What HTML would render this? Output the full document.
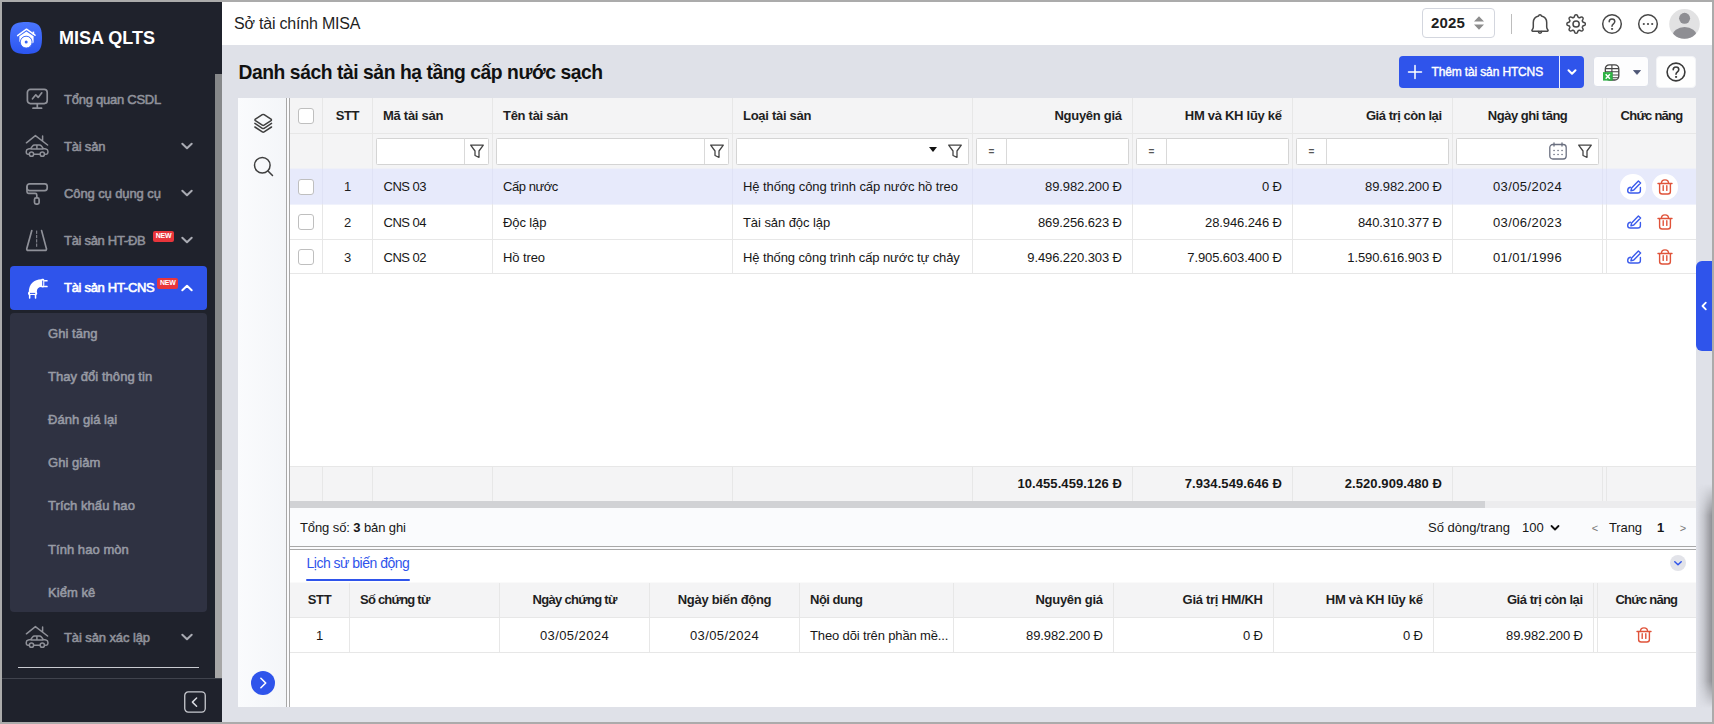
<!DOCTYPE html>
<html lang="vi">
<head>
<meta charset="utf-8">
<title>MISA QLTS</title>
<style>
*{box-sizing:border-box;margin:0;padding:0}
html,body{width:1714px;height:724px;overflow:hidden;background:#dfe1e8;font-family:"Liberation Sans",sans-serif;font-size:13px;color:#171717}
#app{position:absolute;left:0;top:0;width:1714px;height:724px;overflow:hidden;background:#dfe1e8}
.t{position:absolute;white-space:nowrap}
svg{position:absolute;overflow:visible}
.cb{position:absolute;width:16px;height:16px;border:1px solid #bfbfbf;border-radius:3px;background:#fff}
.vl{position:absolute;width:1px;background:#e2e2e2}
.hl{position:absolute;height:1px;background:#e2e2e2}
.fi{position:absolute;height:27px;border:1px solid #d4d4d4;border-radius:1.5px;background:#fff}
</style>
</head>
<body>
<div id="app">
<div style="position:absolute;left:0px;top:0px;width:222px;height:724px;background:#1f222c;"></div>
<div style="position:absolute;left:215px;top:74px;width:7px;height:396px;background:#86888a;"></div>
<div style="position:absolute;left:215px;top:470px;width:7px;height:208px;background:#a7a7a7;"></div>
<svg style="left:10px;top:22px" width="32" height="32" viewBox="0 0 32 32">
<defs><linearGradient id="lg" x1="0" y1="0" x2="0" y2="1"><stop offset="0" stop-color="#4a76ff"/><stop offset="1" stop-color="#2b55f0"/></linearGradient></defs>
<path d="M16 0C28.500 0 32 3.500 32 16C32 28.500 28.500 32 16 32C3.500 32 0 28.500 0 16C0 3.500 3.500 0 16 0Z" fill="url(#lg)"/>
<path d="M7.6 13.6L16.5 7.2L25 13.2" fill="none" stroke="#fff" stroke-width="1.5" stroke-linecap="round" stroke-linejoin="round"/>
<path d="M22.6 9.6h1.6v3h-1.6z" fill="#fff"/>
<path d="M9.4 19.5v-5.2L16.4 9.4L23.6 14.3v6.2l-2 1.2a5.6 5.6 0 1 0 -10.6 -0.6z" fill="#fff"/>
<circle cx="16.200" cy="20.100" r="5.900" fill="#fff" stroke="#3a66f8" stroke-width="0.900"/>
<circle cx="16.200" cy="20.100" r="1.500" fill="#3a66f8"/>
</svg>
<div class="t" style="top:28px;font-size:18px;line-height:20px;font-weight:700;color:#fff;left:59px;">MISA QLTS</div>
<div class="t" style="top:90px;font-size:13px;line-height:20px;color:#90929b;letter-spacing:-0.25px;-webkit-text-stroke:0.55px currentColor;left:64px;">Tổng quan CSDL</div>
<div class="t" style="top:137px;font-size:13px;line-height:20px;color:#90929b;letter-spacing:-0.2px;-webkit-text-stroke:0.55px currentColor;left:64px;">Tài sản</div>
<svg style="left:186.5px;top:145.7px" width="1" height="1"><path d="M-4.700 -2.300L0 2.300L4.700 -2.300" fill="none" stroke="#a9abb3" stroke-width="2" stroke-linecap="round" stroke-linejoin="round"/></svg>
<div class="t" style="top:184px;font-size:13px;line-height:20px;color:#90929b;letter-spacing:-0.1px;-webkit-text-stroke:0.55px currentColor;left:64px;">Công cụ dụng cụ</div>
<svg style="left:186.5px;top:193.2px" width="1" height="1"><path d="M-4.700 -2.300L0 2.300L4.700 -2.300" fill="none" stroke="#a9abb3" stroke-width="2" stroke-linecap="round" stroke-linejoin="round"/></svg>
<div class="t" style="top:231px;font-size:13px;line-height:20px;color:#90929b;letter-spacing:-0.3px;-webkit-text-stroke:0.55px currentColor;left:64px;">Tài sản HT-ĐB</div>
<svg style="left:186.5px;top:240px" width="1" height="1"><path d="M-4.700 -2.300L0 2.300L4.700 -2.300" fill="none" stroke="#a9abb3" stroke-width="2" stroke-linecap="round" stroke-linejoin="round"/></svg>
<div style="position:absolute;left:10px;top:266px;width:197px;height:44px;background:#2f54eb;border-radius:4px;"></div>
<div class="t" style="top:278px;font-size:13px;line-height:20px;color:#fff;letter-spacing:-0.3px;-webkit-text-stroke:0.6px currentColor;left:64px;">Tài sản HT-CNS</div>
<svg style="left:186.5px;top:288px" width="1" height="1"><path d="M-4.700 2.300L0 -2.300L4.700 2.300" fill="none" stroke="#fff" stroke-width="2" stroke-linecap="round" stroke-linejoin="round"/></svg>
<div style="position:absolute;left:153px;top:231.3px;width:21px;height:10.5px;background:#e8353b;border-radius:2px;color:#fff;font-size:7px;font-weight:700;line-height:10.5px;text-align:center;letter-spacing:-0.2px;">NEW</div>
<div style="position:absolute;left:157.3px;top:278.3px;width:21px;height:10.5px;background:#e8353b;border-radius:2px;color:#fff;font-size:7px;font-weight:700;line-height:10.5px;text-align:center;letter-spacing:-0.2px;">NEW</div>
<div style="position:absolute;left:10px;top:312.5px;width:197px;height:299px;background:#2f3242;border-radius:4px;"></div>
<div class="t" style="top:324px;font-size:13px;line-height:20px;color:#979aa4;letter-spacing:0.05px;-webkit-text-stroke:0.55px currentColor;left:48px;">Ghi tăng</div>
<div class="t" style="top:367px;font-size:13px;line-height:20px;color:#979aa4;letter-spacing:0.05px;-webkit-text-stroke:0.55px currentColor;left:48px;">Thay đổi thông tin</div>
<div class="t" style="top:410px;font-size:13px;line-height:20px;color:#979aa4;letter-spacing:0.05px;-webkit-text-stroke:0.55px currentColor;left:48px;">Đánh giá lại</div>
<div class="t" style="top:453px;font-size:13px;line-height:20px;color:#979aa4;letter-spacing:0.05px;-webkit-text-stroke:0.55px currentColor;left:48px;">Ghi giảm</div>
<div class="t" style="top:496px;font-size:13px;line-height:20px;color:#979aa4;letter-spacing:0.05px;-webkit-text-stroke:0.55px currentColor;left:48px;">Trích khấu hao</div>
<div class="t" style="top:540px;font-size:13px;line-height:20px;color:#979aa4;letter-spacing:0.05px;-webkit-text-stroke:0.55px currentColor;left:48px;">Tính hao mòn</div>
<div class="t" style="top:583px;font-size:13px;line-height:20px;color:#979aa4;letter-spacing:0.05px;-webkit-text-stroke:0.55px currentColor;left:48px;">Kiểm kê</div>
<div class="t" style="top:628px;font-size:13px;line-height:20px;color:#90929b;letter-spacing:-0.1px;-webkit-text-stroke:0.55px currentColor;left:64px;">Tài sản xác lập</div>
<svg style="left:186.5px;top:636.5px" width="1" height="1"><path d="M-4.700 -2.300L0 2.300L4.700 -2.300" fill="none" stroke="#a9abb3" stroke-width="2" stroke-linecap="round" stroke-linejoin="round"/></svg>
<div style="position:absolute;left:18px;top:667px;width:181px;height:1px;background:#c9cbd1;"></div>
<div style="position:absolute;left:0px;top:677.6px;width:222px;height:47px;background:#1f222c;border-top:1px solid #40434d;"></div>
<svg style="left:184px;top:690.500px" width="22" height="22" viewBox="0 0 22 22"><rect x="0.750" y="0.900" width="20.500" height="20.200" rx="3.500" fill="none" stroke="#c8cad0" stroke-width="1.300"/><path d="M12.600 7L8.400 11.100L12.600 15.200" fill="none" stroke="#d8dae0" stroke-width="1.500" stroke-linecap="round" stroke-linejoin="round"/></svg>
<svg style="left:25px;top:87px" width="24" height="24" viewBox="0 0 24 24" fill="none" stroke="#8f9199" stroke-width="1.7" stroke-linecap="round" stroke-linejoin="round"><rect x="2.4" y="2.4" width="19.8" height="14.2" rx="3"/><path d="M12.3 16.8v4.2M8 21.2h8.600M7.500 11.800l3.300-4 2.400 2.600 3.600-4.600"/></svg>
<svg style="left:25px;top:134px" width="24" height="24" viewBox="0 0 24 24" fill="none" stroke="#8f9199" stroke-width="1.500" stroke-linecap="round" stroke-linejoin="round"><path d="M1.400 8.800L10.400 1.600L22.600 11M17.600 2v4.800"/><path d="M3.600 20.300h-.6c-1 0-1.700-.7-1.700-1.700v-1.400c0-1.200.8-2 2-2.200l2.300-.4 2-2.600c.5-.7 1.100-1 2-1h4.800c.9 0 1.500.3 2 1l2 2.600 2.500.400c1.200.200 2 1 2 2.200v1.400c0 1-.7 1.700-1.700 1.700h-.6M9 20.300h5.800M11.900 11.200v3.600M6 15h12"/><circle cx="6.500" cy="20.200" r="2.100"/><circle cx="17.300" cy="20.200" r="2.100"/></svg>
<svg style="left:25px;top:625px" width="24" height="24" viewBox="0 0 24 24" fill="none" stroke="#8f9199" stroke-width="1.500" stroke-linecap="round" stroke-linejoin="round"><path d="M1.400 8.800L10.400 1.600L22.600 11M17.600 2v4.800"/><path d="M3.600 20.300h-.6c-1 0-1.700-.7-1.700-1.700v-1.400c0-1.200.8-2 2-2.200l2.300-.4 2-2.600c.5-.7 1.100-1 2-1h4.800c.9 0 1.500.3 2 1l2 2.600 2.500.400c1.200.200 2 1 2 2.200v1.400c0 1-.7 1.700-1.700 1.700h-.6M9 20.300h5.800M11.900 11.200v3.600M6 15h12"/><circle cx="6.500" cy="20.200" r="2.100"/><circle cx="17.300" cy="20.200" r="2.100"/></svg>
<svg style="left:25px;top:182px" width="24" height="24" viewBox="0 0 24 24" fill="none" stroke="#8f9199" stroke-width="1.7" stroke-linecap="round" stroke-linejoin="round"><rect x="2" y="1.800" width="20.200" height="6.800" rx="2.500"/><path d="M2 4.800v5c0 1 .6 1.600 1.500 1.600h6.800c1 0 1.500.5 1.500 1.500v2.600"/><rect x="9.500" y="15.800" width="4.600" height="6.400" rx="1.600"/></svg>
<svg style="left:25px;top:228px" width="24" height="24" viewBox="0 0 24 24" fill="none" stroke="#8f9199" stroke-width="1.7" stroke-linecap="round" stroke-linejoin="round"><path d="M6.800 2.600L1.800 20.600c-.3 1 .3 1.800 1.300 1.800h17c1 0 1.600-.8 1.300-1.800L16.600 2.600"/><path d="M11.700 3v17" stroke-width="1" stroke-dasharray="2.500 1.800"/></svg>
<svg style="left:20px;top:270px" width="36" height="36" viewBox="0 0 36 36" fill="#fff"><path d="M8.800 22C8.800 14 14 9.200 21.400 9.200L21.400 17C18.500 17 16.800 18.700 16.800 22Z"/><rect x="8" y="21.800" width="9.200" height="3.300" rx="1.300"/><rect x="10" y="22.900" width="5.200" height="1" fill="#2f54eb"/><rect x="8.900" y="24.600" width="1.500" height="4.100" rx=".6"/><rect x="14.800" y="24.600" width="1.500" height="4.100" rx=".6"/><rect x="21" y="8.800" width="3.300" height="8.800" rx="1.300"/><rect x="22.200" y="10.600" width="1" height="5.200" fill="#2f54eb"/><rect x="24" y="10.100" width="3.700" height="1.500" rx=".6"/><rect x="24" y="15.800" width="3.700" height="1.500" rx=".6"/></svg>
<div style="position:absolute;left:222px;top:0px;width:1492px;height:45px;background:#fff;"></div>
<div class="t" style="top:14px;font-size:16px;line-height:20px;color:#1f1f1f;letter-spacing:-0.2px;left:234px;">Sở tài chính MISA</div>
<div style="position:absolute;left:1422px;top:7.5px;width:72.5px;height:30px;border:1px solid #d3d6de;border-radius:4px;background:#fff;"></div>
<div class="t" style="top:13px;font-size:15px;line-height:20px;font-weight:700;color:#1f1f1f;letter-spacing:0.15px;left:1431px;">2025</div>
<svg style="left:1473.5px;top:16px" width="10" height="14" viewBox="0 0 10 14"><path d="M5 0.300L10 5.500H0z M5 13.700L10 8.500H0z" fill="#8d8d8d"/></svg>
<div style="position:absolute;left:1511px;top:13.5px;width:1px;height:20px;background:#bdbdbd;"></div>
<svg style="left:1530px;top:13px" width="20" height="22" viewBox="0 0 20 22" fill="none" stroke="#484848" stroke-width="1.500" stroke-linecap="round" stroke-linejoin="round"><path d="M10 1.700C9.200 1.700 8.700 2.200 8.600 2.900C5.300 3.700 3.300 6.100 3.300 9.400V14C3.300 15.200 2.800 16.100 2.100 17C1.700 17.500 2 18.200 2.700 18.200H17.300C18 18.200 18.300 17.500 17.900 17C17.200 16.100 16.700 15.200 16.700 14V9.400C16.700 6.100 14.700 3.700 11.400 2.900C11.300 2.200 10.800 1.700 10 1.700Z"/><path d="M8.300 18.500C8.400 19.700 9 20.200 10 20.200C11 20.200 11.600 19.700 11.700 18.500"/></svg>
<svg style="left:1566px;top:14px" width="20" height="20" viewBox="0 0 20 20" fill="none" stroke="#484848" stroke-width="1.500" stroke-linejoin="round"><path d="M10.10 0.85L10.46 0.86L10.82 0.88L11.15 1.14L11.43 1.60L11.67 2.10L11.87 2.62L12.05 3.09L12.25 3.39L12.51 3.48L12.76 3.58L13.01 3.69L13.26 3.81L13.61 3.74L14.07 3.53L14.57 3.31L15.10 3.12L15.62 2.99L16.04 3.04L16.31 3.28L16.57 3.53L16.82 3.79L17.06 4.06L17.11 4.48L16.98 5.00L16.79 5.53L16.57 6.03L16.36 6.49L16.29 6.84L16.41 7.09L16.52 7.34L16.62 7.59L16.71 7.85L17.01 8.05L17.48 8.23L18.00 8.43L18.50 8.67L18.96 8.95L19.22 9.28L19.24 9.64L19.25 10.00L19.24 10.36L19.22 10.72L18.96 11.05L18.50 11.33L18.00 11.57L17.48 11.77L17.01 11.95L16.71 12.15L16.62 12.41L16.52 12.66L16.41 12.91L16.29 13.16L16.36 13.51L16.57 13.97L16.79 14.47L16.98 15.00L17.11 15.52L17.06 15.94L16.82 16.21L16.57 16.47L16.31 16.72L16.04 16.96L15.62 17.01L15.10 16.88L14.57 16.69L14.07 16.47L13.61 16.26L13.26 16.19L13.01 16.31L12.76 16.42L12.51 16.52L12.25 16.61L12.05 16.91L11.87 17.38L11.67 17.90L11.43 18.40L11.15 18.86L10.82 19.12L10.46 19.14L10.10 19.15L9.74 19.14L9.38 19.12L9.05 18.86L8.77 18.40L8.53 17.90L8.33 17.38L8.15 16.91L7.95 16.61L7.69 16.52L7.44 16.42L7.19 16.31L6.94 16.19L6.59 16.26L6.13 16.47L5.63 16.69L5.10 16.88L4.58 17.01L4.16 16.96L3.89 16.72L3.63 16.47L3.38 16.21L3.14 15.94L3.09 15.52L3.22 15.00L3.41 14.47L3.63 13.97L3.84 13.51L3.91 13.16L3.79 12.91L3.68 12.66L3.58 12.41L3.49 12.15L3.19 11.95L2.72 11.77L2.20 11.57L1.70 11.33L1.24 11.05L0.98 10.72L0.96 10.36L0.95 10.00L0.96 9.64L0.98 9.28L1.24 8.95L1.70 8.67L2.20 8.43L2.72 8.23L3.19 8.05L3.49 7.85L3.58 7.59L3.68 7.34L3.79 7.09L3.91 6.84L3.84 6.49L3.63 6.03L3.41 5.53L3.22 5.00L3.09 4.48L3.14 4.06L3.38 3.79L3.63 3.53L3.89 3.28L4.16 3.04L4.58 2.99L5.10 3.12L5.63 3.31L6.13 3.53L6.59 3.74L6.94 3.81L7.19 3.69L7.44 3.58L7.69 3.48L7.95 3.39L8.15 3.09L8.33 2.62L8.53 2.10L8.77 1.60L9.05 1.14L9.38 0.88L9.74 0.86Z"/><circle cx="10.100" cy="10" r="3.100"/></svg>
<svg style="left:1601px;top:13px" width="22" height="22" viewBox="0 0 22 22" fill="none" stroke="#484848" stroke-width="1.5" stroke-linecap="round" stroke-linejoin="round"><circle cx="11" cy="11" r="9.3"/><path d="M8.200 8.800c0-1.700 1.200-2.800 2.800-2.800s2.800 1.100 2.800 2.600c0 1.300-.8 1.900-1.600 2.500-.8.600-1.200 1.100-1.200 2.100"/><circle cx="11" cy="15.900" r="0.600" fill="#484848" stroke-width="1"/></svg>
<svg style="left:1637px;top:13px" width="22" height="22" viewBox="0 0 22 22" fill="none" stroke="#484848" stroke-width="1.500"><circle cx="11" cy="11" r="9.300"/><g fill="#484848" stroke="none"><circle cx="6.800" cy="11" r="1.100"/><circle cx="11" cy="11" r="1.100"/><circle cx="15.200" cy="11" r="1.100"/></g></svg>
<svg style="left:1668.500px;top:8.500px" width="31" height="30" viewBox="0 0 31 30"><defs><clipPath id="av"><ellipse cx="15.500" cy="15" rx="15" ry="14.700"/></clipPath></defs><ellipse cx="15.500" cy="15" rx="15.300" ry="15" fill="#e2e2e3"/><g clip-path="url(#av)" fill="#8e8e93"><circle cx="15.600" cy="9.300" r="5.500"/><ellipse cx="15.600" cy="27.300" rx="12.200" ry="9.300"/></g></svg>
<div class="t" style="top:63px;font-size:19.3px;line-height:20px;font-weight:700;color:#111;letter-spacing:-0.44px;left:238.5px;">Danh sách tài sản hạ tầng cấp nước sạch</div>
<div style="position:absolute;left:1399px;top:56px;width:160px;height:32px;background:#2f54eb;border-radius:4px 0 0 4px;"></div>
<div style="position:absolute;left:1560px;top:56px;width:24px;height:32px;background:#2f54eb;border-radius:0 4px 4px 0;"></div>
<div style="position:absolute;left:1559px;top:56px;width:1px;height:32px;background:#e8ecff;"></div>
<svg style="left:1408px;top:65px" width="14" height="14" viewBox="0 0 14 14"><path d="M7 0.500v13M0.500 7h13" stroke="#fff" stroke-width="1.500" stroke-linecap="round"/></svg>
<div class="t" style="top:62px;font-size:12px;line-height:20px;color:#fff;letter-spacing:-0.14px;-webkit-text-stroke:0.4px currentColor;left:1431.5px;">Thêm tài sản HTCNS</div>
<svg style="left:1572px;top:72px" width="1" height="1"><path d="M-3.500 -1.800L0 1.800L3.500 -1.800" fill="none" stroke="#fff" stroke-width="2" stroke-linecap="round" stroke-linejoin="round"/></svg>
<div style="position:absolute;left:1592.8px;top:56.4px;width:56.4px;height:30.8px;background:#fdfdfe;border:1px solid #dcdfe8;border-radius:4px;"></div>
<svg style="left:1603px;top:63.500px" width="17" height="17" viewBox="0 0 17 17"><rect x="2.300" y="0.900" width="13.500" height="15.100" rx="4" fill="#fff" stroke="#444" stroke-width="1.300"/><path d="M8.900 0.900v15.100M2.300 4.600h13.500M2.300 7.800h13.500M2.300 11h13.500M6 13.800h9.500" stroke="#444" stroke-width="1.100" fill="none"/><rect x="0" y="8.100" width="9.600" height="8.500" fill="#2eb344"/><path d="M2.700 10.200l4.200 4.600M6.900 10.200l-4.200 4.600" stroke="#fff" stroke-width="1.500"/></svg>
<svg style="left:1632.700px;top:70px" width="8" height="5" viewBox="0 0 8 5"><path d="M0.500 0.500h7L4 4.400z" fill="#4d5575" stroke="#4d5575" stroke-width="0.800" stroke-linejoin="round"/></svg>
<div style="position:absolute;left:1656px;top:56px;width:40px;height:32px;background:#fefefe;border:1px solid #f3f4f7;border-radius:4px;"></div>
<svg style="left:1665.1px;top:61.099999999999994px" width="22" height="22" viewBox="0 0 22 22" fill="none" stroke="#3a3a3a" stroke-width="1.6" stroke-linecap="round" stroke-linejoin="round"><circle cx="11" cy="11" r="8.9"/><path d="M8.200 8.800c0-1.700 1.200-2.800 2.800-2.800s2.800 1.100 2.800 2.600c0 1.300-.8 1.900-1.600 2.500-.8.600-1.200 1.100-1.200 2.100"/><circle cx="11" cy="15.900" r="0.600" fill="#3a3a3a" stroke-width="1"/></svg>
<div style="position:absolute;left:238px;top:98px;width:48px;height:608.5px;background:linear-gradient(90deg,#fafbfd,#f4f6f9);"></div>
<div style="position:absolute;left:286px;top:98px;width:1px;height:608.5px;background:#a8a8a8;"></div>
<div style="position:absolute;left:287px;top:98px;width:2px;height:608.5px;background:#fbfbfd;"></div>
<div style="position:absolute;left:289px;top:98px;width:1px;height:608.5px;background:#a8a8a8;"></div>
<svg style="left:253px;top:113px" width="20" height="20" viewBox="0 0 20 20" fill="none" stroke="#3f3f3f" stroke-width="1.500" stroke-linejoin="round" stroke-linecap="round"><path d="M9.300 1.700q.900-.600 1.800 0L18 6.200q.900.700 0 1.400L11.100 12.100q-.900.600-1.800 0L2.400 7.600q-.900-.700 0-1.400z"/><path d="M1.900 10.400L9.300 15.300q.900.600 1.800 0L18.500 10.400M1.900 14L9.300 18.900q.900.600 1.800 0L18.500 14"/></svg>
<svg style="left:253px;top:156px" width="21" height="21" viewBox="0 0 21 21" fill="none" stroke="#3f3f3f" stroke-width="1.500" stroke-linecap="round"><circle cx="9.300" cy="9.300" r="7.800"/><path d="M15 15l4.500 4.500"/></svg>
<svg style="left:251px;top:671px" width="24" height="24" viewBox="0 0 24 24"><circle cx="12" cy="12" r="12" fill="#2f54eb"/><path d="M9.900 7.300L14.700 12L9.900 16.700" fill="none" stroke="#fff" stroke-width="1.600" stroke-linecap="round" stroke-linejoin="round"/></svg>
<div style="position:absolute;left:290px;top:98px;width:1406px;height:608.5px;background:#fff;"></div>
<div style="position:absolute;left:290px;top:98px;width:1406px;height:71px;background:#f4f4f5;"></div>
<div style="position:absolute;left:290px;top:169px;width:1406px;height:35px;background:#e7eafb;"></div>
<div style="position:absolute;left:290px;top:168px;width:1406px;height:1px;background:#eff0f7;"></div>
<div style="position:absolute;left:290px;top:204px;width:1406px;height:1px;background:#f0f2fc;"></div>
<div style="position:absolute;left:290px;top:133px;width:1406px;height:1px;background:#e7e7e7;"></div>
<div style="position:absolute;left:290px;top:239px;width:1406px;height:1px;background:#e7e7e7;"></div>
<div style="position:absolute;left:290px;top:273px;width:1406px;height:1px;background:#e7e7e7;"></div>
<div style="position:absolute;left:322px;top:98px;width:1px;height:71px;background:#e7e7e7;"></div>
<div style="position:absolute;left:322px;top:169px;width:1px;height:35px;background:#dfe2f5;"></div>
<div style="position:absolute;left:322px;top:204px;width:1px;height:70px;background:#e7e7e7;"></div>
<div style="position:absolute;left:372px;top:98px;width:1px;height:71px;background:#e7e7e7;"></div>
<div style="position:absolute;left:372px;top:169px;width:1px;height:35px;background:#dfe2f5;"></div>
<div style="position:absolute;left:372px;top:204px;width:1px;height:70px;background:#e7e7e7;"></div>
<div style="position:absolute;left:492px;top:98px;width:1px;height:71px;background:#e7e7e7;"></div>
<div style="position:absolute;left:492px;top:169px;width:1px;height:35px;background:#dfe2f5;"></div>
<div style="position:absolute;left:492px;top:204px;width:1px;height:70px;background:#e7e7e7;"></div>
<div style="position:absolute;left:732px;top:98px;width:1px;height:71px;background:#e7e7e7;"></div>
<div style="position:absolute;left:732px;top:169px;width:1px;height:35px;background:#dfe2f5;"></div>
<div style="position:absolute;left:732px;top:204px;width:1px;height:70px;background:#e7e7e7;"></div>
<div style="position:absolute;left:972px;top:98px;width:1px;height:71px;background:#e7e7e7;"></div>
<div style="position:absolute;left:972px;top:169px;width:1px;height:35px;background:#dfe2f5;"></div>
<div style="position:absolute;left:972px;top:204px;width:1px;height:70px;background:#e7e7e7;"></div>
<div style="position:absolute;left:1132px;top:98px;width:1px;height:71px;background:#e7e7e7;"></div>
<div style="position:absolute;left:1132px;top:169px;width:1px;height:35px;background:#dfe2f5;"></div>
<div style="position:absolute;left:1132px;top:204px;width:1px;height:70px;background:#e7e7e7;"></div>
<div style="position:absolute;left:1292px;top:98px;width:1px;height:71px;background:#e7e7e7;"></div>
<div style="position:absolute;left:1292px;top:169px;width:1px;height:35px;background:#dfe2f5;"></div>
<div style="position:absolute;left:1292px;top:204px;width:1px;height:70px;background:#e7e7e7;"></div>
<div style="position:absolute;left:1452px;top:98px;width:1px;height:71px;background:#e7e7e7;"></div>
<div style="position:absolute;left:1452px;top:169px;width:1px;height:35px;background:#dfe2f5;"></div>
<div style="position:absolute;left:1452px;top:204px;width:1px;height:70px;background:#e7e7e7;"></div>
<div style="position:absolute;left:1602px;top:98px;width:1px;height:71px;background:#e7e7e7;"></div>
<div style="position:absolute;left:1602px;top:169px;width:1px;height:35px;background:#dfe2f5;"></div>
<div style="position:absolute;left:1602px;top:204px;width:1px;height:70px;background:#e7e7e7;"></div>
<div style="position:absolute;left:1606px;top:98px;width:1px;height:71px;background:#e7e7e7;"></div>
<div style="position:absolute;left:1606px;top:169px;width:1px;height:35px;background:#dfe2f5;"></div>
<div style="position:absolute;left:1606px;top:204px;width:1px;height:70px;background:#e7e7e7;"></div>
<div class="cb" style="left:298px;top:108px"></div>
<div class="t" style="top:106px;font-size:13px;line-height:20px;font-weight:700;color:#1f1f1f;letter-spacing:-0.5px;left:197.3px;width:300px;text-align:center;">STT</div>
<div class="t" style="top:106px;font-size:13px;line-height:20px;font-weight:700;color:#1f1f1f;letter-spacing:-0.28px;left:383px;">Mã tài sản</div>
<div class="t" style="top:106px;font-size:13px;line-height:20px;font-weight:700;color:#1f1f1f;letter-spacing:-0.28px;left:503px;">Tên tài sản</div>
<div class="t" style="top:106px;font-size:13px;line-height:20px;font-weight:700;color:#1f1f1f;letter-spacing:-0.28px;left:743px;">Loại tài sản</div>
<div class="t" style="top:106px;font-size:13px;line-height:20px;font-weight:700;color:#1f1f1f;letter-spacing:-0.28px;right:592.28px;text-align:right;">Nguyên giá</div>
<div class="t" style="top:106px;font-size:13px;line-height:20px;font-weight:700;color:#1f1f1f;letter-spacing:-0.28px;right:432.28px;text-align:right;">HM và KH lũy kế</div>
<div class="t" style="top:106px;font-size:13px;line-height:20px;font-weight:700;color:#1f1f1f;letter-spacing:-0.45px;right:272.45px;text-align:right;">Giá trị còn lại</div>
<div class="t" style="top:106px;font-size:13px;line-height:20px;font-weight:700;color:#1f1f1f;letter-spacing:-0.5px;left:1377.6px;width:300px;text-align:center;">Ngày ghi tăng</div>
<div class="t" style="top:106px;font-size:13px;line-height:20px;font-weight:700;color:#1f1f1f;letter-spacing:-0.76px;left:1501.5px;width:300px;text-align:center;">Chức năng</div>
<div class="fi" style="left:376px;top:137.500px;width:112.5px"></div>
<div style="position:absolute;left:464px;top:138px;width:1px;height:26px;background:#d9d9d9;"></div>
<svg style="left:470.2px;top:144.2px" width="14" height="14" viewBox="0 0 14 14"><path d="M0.700 1.100h12.600L9 7v6.300L5 11.500V7z" fill="none" stroke="#444" stroke-width="1.300" stroke-linejoin="round"/></svg>
<div class="fi" style="left:496px;top:137.500px;width:232.5px"></div>
<div style="position:absolute;left:704px;top:138px;width:1px;height:26px;background:#d9d9d9;"></div>
<svg style="left:710.2px;top:144.2px" width="14" height="14" viewBox="0 0 14 14"><path d="M0.700 1.100h12.600L9 7v6.300L5 11.500V7z" fill="none" stroke="#444" stroke-width="1.300" stroke-linejoin="round"/></svg>
<div class="fi" style="left:736px;top:137.500px;width:232.5px"></div>
<svg style="left:948.2px;top:144.2px" width="14" height="14" viewBox="0 0 14 14"><path d="M0.700 1.100h12.600L9 7v6.300L5 11.500V7z" fill="none" stroke="#444" stroke-width="1.300" stroke-linejoin="round"/></svg>
<svg style="left:928.500px;top:146.500px" width="8" height="5" viewBox="0 0 8 5"><path d="M0 0h8L4 5z" fill="#111"/></svg>
<div class="fi" style="left:976px;top:137.500px;width:152.5px"></div>
<div style="position:absolute;left:1006px;top:138px;width:1px;height:26px;background:#d9d9d9;"></div>
<div class="t" style="top:142px;font-size:10px;line-height:20px;font-weight:700;color:#555;left:841.5px;width:300px;text-align:center;">=</div>
<div class="fi" style="left:1136px;top:137.500px;width:152.5px"></div>
<div style="position:absolute;left:1166px;top:138px;width:1px;height:26px;background:#d9d9d9;"></div>
<div class="t" style="top:142px;font-size:10px;line-height:20px;font-weight:700;color:#555;left:1001.5px;width:300px;text-align:center;">=</div>
<div class="fi" style="left:1296px;top:137.500px;width:152.5px"></div>
<div style="position:absolute;left:1326px;top:138px;width:1px;height:26px;background:#d9d9d9;"></div>
<div class="t" style="top:142px;font-size:10px;line-height:20px;font-weight:700;color:#555;left:1161.5px;width:300px;text-align:center;">=</div>
<div class="fi" style="left:1456px;top:137.500px;width:142.5px"></div>
<svg style="left:1578.2px;top:144.2px" width="14" height="14" viewBox="0 0 14 14"><path d="M0.700 1.100h12.600L9 7v6.300L5 11.500V7z" fill="none" stroke="#444" stroke-width="1.300" stroke-linejoin="round"/></svg>
<svg style="left:1549px;top:142px" width="18" height="18" viewBox="0 0 18 18" fill="none" stroke="#6b7080" stroke-width="1.300" stroke-linecap="round"><rect x="0.800" y="2.500" width="16.400" height="14.500" rx="3"/><path d="M5 0.800v3.200M13 0.800v3.200"/><g stroke-width="1.500"><path d="M5 8.500h0.100M9 8.500h0.100M13 8.500h0.100M5 12.500h0.100M9 12.500h0.100M13 12.500h0.100"/></g></svg>
<div class="cb" style="left:298px;top:179.0px"></div>
<div class="t" style="top:177px;font-size:13px;line-height:20px;color:#1f1f1f;left:197.5px;width:300px;text-align:center;">1</div>
<div class="t" style="top:177px;font-size:13px;line-height:20px;letter-spacing:-0.5px;left:383.5px;">CNS 03</div>
<div class="t" style="top:177px;font-size:13px;line-height:20px;letter-spacing:-0.44px;left:503px;">Cấp nước</div>
<div class="t" style="top:177px;font-size:13px;line-height:20px;letter-spacing:-0.07px;left:743px;">Hệ thống công trình cấp nước hồ treo</div>
<div class="t" style="top:177px;font-size:13px;line-height:20px;letter-spacing:-0.1px;right:592.10px;text-align:right;">89.982.200 Đ</div>
<div class="t" style="top:177px;font-size:13px;line-height:20px;letter-spacing:-0.1px;right:432.10px;text-align:right;">0 Đ</div>
<div class="t" style="top:177px;font-size:13px;line-height:20px;letter-spacing:-0.1px;right:272.10px;text-align:right;">89.982.200 Đ</div>
<div class="t" style="top:177px;font-size:13px;line-height:20px;letter-spacing:0.4px;left:1377.5px;width:300px;text-align:center;">03/05/2024</div>
<div style="position:absolute;left:1620.4px;top:174.4px;width:25.2px;height:25.2px;background:#fff;border-radius:50%;"></div>
<div style="position:absolute;left:1652.4px;top:174.4px;width:25.2px;height:25.2px;background:#fff;border-radius:50%;"></div>
<svg style="left:1625.5px;top:178.8px" width="16" height="16" viewBox="0 0 16 16" fill="none" stroke="#3b5bec" stroke-width="1.400" stroke-linecap="round" stroke-linejoin="round"><path d="M4.400 8.200C2.600 8.600 1.700 9.800 1.700 11.400C1.700 13.200 2.700 14 4.400 14H11.800C13.500 14 14.400 13.100 14.400 11.400V8.400"/><path d="M12.400 2L14.600 4.100L7.800 11L4.900 11.800L5.600 8.900Z"/></svg>
<svg style="left:1657px;top:178.7px" width="16" height="16" viewBox="0 0 16 16" fill="none" stroke="#e0533a" stroke-width="1.400" stroke-linecap="round" stroke-linejoin="round"><path d="M1 4.500h14M4.400 4.500C4.400 2.200 5.800 .9 8 .9C10.200 .9 11.600 2.200 11.600 4.500"/><path d="M2.600 4.700v7.800c0 1.700.9 2.500 2.500 2.500h5.800c1.600 0 2.500-.8 2.500-2.500V4.700"/><path d="M6.200 6.800v4.600M9.800 6.800v4.600"/></svg>
<div class="cb" style="left:298px;top:214.0px"></div>
<div class="t" style="top:213px;font-size:13px;line-height:20px;color:#1f1f1f;left:197.5px;width:300px;text-align:center;">2</div>
<div class="t" style="top:213px;font-size:13px;line-height:20px;letter-spacing:-0.5px;left:383.5px;">CNS 04</div>
<div class="t" style="top:213px;font-size:13px;line-height:20px;letter-spacing:-0.1px;left:503px;">Độc lập</div>
<div class="t" style="top:213px;font-size:13px;line-height:20px;letter-spacing:-0.07px;left:743px;">Tài sản độc lập</div>
<div class="t" style="top:213px;font-size:13px;line-height:20px;letter-spacing:-0.1px;right:592.10px;text-align:right;">869.256.623 Đ</div>
<div class="t" style="top:213px;font-size:13px;line-height:20px;letter-spacing:-0.1px;right:432.10px;text-align:right;">28.946.246 Đ</div>
<div class="t" style="top:213px;font-size:13px;line-height:20px;letter-spacing:-0.1px;right:272.10px;text-align:right;">840.310.377 Đ</div>
<div class="t" style="top:213px;font-size:13px;line-height:20px;letter-spacing:0.4px;left:1377.5px;width:300px;text-align:center;">03/06/2023</div>
<svg style="left:1625.5px;top:213.8px" width="16" height="16" viewBox="0 0 16 16" fill="none" stroke="#3b5bec" stroke-width="1.400" stroke-linecap="round" stroke-linejoin="round"><path d="M4.400 8.200C2.600 8.600 1.700 9.800 1.700 11.400C1.700 13.200 2.700 14 4.400 14H11.800C13.500 14 14.400 13.100 14.400 11.400V8.400"/><path d="M12.400 2L14.600 4.100L7.800 11L4.900 11.800L5.600 8.900Z"/></svg>
<svg style="left:1657px;top:213.7px" width="16" height="16" viewBox="0 0 16 16" fill="none" stroke="#e0533a" stroke-width="1.400" stroke-linecap="round" stroke-linejoin="round"><path d="M1 4.500h14M4.400 4.500C4.400 2.200 5.800 .9 8 .9C10.200 .9 11.600 2.200 11.600 4.500"/><path d="M2.600 4.700v7.800c0 1.700.9 2.500 2.500 2.500h5.800c1.600 0 2.500-.8 2.500-2.500V4.700"/><path d="M6.200 6.800v4.600M9.800 6.800v4.600"/></svg>
<div class="cb" style="left:298px;top:249.0px"></div>
<div class="t" style="top:248px;font-size:13px;line-height:20px;color:#1f1f1f;left:197.5px;width:300px;text-align:center;">3</div>
<div class="t" style="top:248px;font-size:13px;line-height:20px;letter-spacing:-0.5px;left:383.5px;">CNS 02</div>
<div class="t" style="top:248px;font-size:13px;line-height:20px;letter-spacing:-0.1px;left:503px;">Hồ treo</div>
<div class="t" style="top:248px;font-size:13px;line-height:20px;letter-spacing:-0.1px;left:743px;">Hệ thống công trình cấp nước tự chảy</div>
<div class="t" style="top:248px;font-size:13px;line-height:20px;letter-spacing:-0.1px;right:592.10px;text-align:right;">9.496.220.303 Đ</div>
<div class="t" style="top:248px;font-size:13px;line-height:20px;letter-spacing:-0.1px;right:432.10px;text-align:right;">7.905.603.400 Đ</div>
<div class="t" style="top:248px;font-size:13px;line-height:20px;letter-spacing:-0.1px;right:272.10px;text-align:right;">1.590.616.903 Đ</div>
<div class="t" style="top:248px;font-size:13px;line-height:20px;letter-spacing:0.4px;left:1377.5px;width:300px;text-align:center;">01/01/1996</div>
<svg style="left:1625.5px;top:248.8px" width="16" height="16" viewBox="0 0 16 16" fill="none" stroke="#3b5bec" stroke-width="1.400" stroke-linecap="round" stroke-linejoin="round"><path d="M4.400 8.200C2.600 8.600 1.700 9.800 1.700 11.400C1.700 13.200 2.700 14 4.400 14H11.800C13.500 14 14.400 13.100 14.400 11.400V8.400"/><path d="M12.400 2L14.600 4.100L7.800 11L4.900 11.800L5.600 8.900Z"/></svg>
<svg style="left:1657px;top:248.7px" width="16" height="16" viewBox="0 0 16 16" fill="none" stroke="#e0533a" stroke-width="1.400" stroke-linecap="round" stroke-linejoin="round"><path d="M1 4.500h14M4.400 4.500C4.400 2.200 5.800 .9 8 .9C10.200 .9 11.600 2.200 11.600 4.500"/><path d="M2.600 4.700v7.800c0 1.700.9 2.500 2.500 2.500h5.800c1.600 0 2.500-.8 2.500-2.500V4.700"/><path d="M6.200 6.800v4.600M9.800 6.800v4.600"/></svg>
<div style="position:absolute;left:1696px;top:261px;width:17px;height:90px;background:#2f54eb;border-radius:6px 0 0 6px;"></div>
<svg style="left:1704.300px;top:306.300px" width="1" height="1"><path d="M1.800 -3.300L-1.500 0L1.800 3.300" fill="none" stroke="#fff" stroke-width="1.800" stroke-linecap="round" stroke-linejoin="round"/></svg>
<div style="position:absolute;left:290px;top:466px;width:1406px;height:35.5px;background:#f4f4f5;border-top:1px solid #e7e7e7;"></div>
<div style="position:absolute;left:322px;top:466px;width:1px;height:35.5px;background:#e7e7e7;"></div>
<div style="position:absolute;left:372px;top:466px;width:1px;height:35.5px;background:#e7e7e7;"></div>
<div style="position:absolute;left:492px;top:466px;width:1px;height:35.5px;background:#e7e7e7;"></div>
<div style="position:absolute;left:732px;top:466px;width:1px;height:35.5px;background:#e7e7e7;"></div>
<div style="position:absolute;left:972px;top:466px;width:1px;height:35.5px;background:#e7e7e7;"></div>
<div style="position:absolute;left:1132px;top:466px;width:1px;height:35.5px;background:#e7e7e7;"></div>
<div style="position:absolute;left:1292px;top:466px;width:1px;height:35.5px;background:#e7e7e7;"></div>
<div style="position:absolute;left:1452px;top:466px;width:1px;height:35.5px;background:#e7e7e7;"></div>
<div style="position:absolute;left:1602px;top:466px;width:1px;height:35.5px;background:#e7e7e7;"></div>
<div style="position:absolute;left:1606px;top:466px;width:1px;height:35.5px;background:#e7e7e7;"></div>
<div class="t" style="top:474px;font-size:13px;line-height:20px;font-weight:700;letter-spacing:0.08px;right:591.92px;text-align:right;">10.455.459.126 Đ</div>
<div class="t" style="top:474px;font-size:13px;line-height:20px;font-weight:700;letter-spacing:0.08px;right:431.92px;text-align:right;">7.934.549.646 Đ</div>
<div class="t" style="top:474px;font-size:13px;line-height:20px;font-weight:700;letter-spacing:0.08px;right:271.92px;text-align:right;">2.520.909.480 Đ</div>
<div style="position:absolute;left:290px;top:501px;width:1406px;height:7.5px;background:#ececee;"></div>
<div style="position:absolute;left:290px;top:501px;width:1195px;height:7.5px;background:#d1d2d5;"></div>
<div style="position:absolute;left:290px;top:508px;width:1406px;height:38px;background:#fafbfd;"></div>
<div class="t" style="top:518px;font-size:13px;line-height:20px;letter-spacing:-0.1px;left:300px;">Tổng số: <b>3</b> bản ghi</div>
<div class="t" style="top:518px;font-size:13px;line-height:20px;letter-spacing:0.02px;left:1428px;">Số dòng/trang</div>
<div class="t" style="top:518px;font-size:13px;line-height:20px;left:1522px;">100</div>
<svg style="left:1555px;top:528px" width="1" height="1"><path d="M-3.500 -2L0 1.500L3.500 -2" fill="none" stroke="#111" stroke-width="1.800" stroke-linecap="round" stroke-linejoin="round"/></svg>
<div class="t" style="top:518px;font-size:11px;line-height:20px;color:#777;left:1445px;width:300px;text-align:center;">&lt;</div>
<div class="t" style="top:518px;font-size:13px;line-height:20px;letter-spacing:-0.1px;left:1609px;">Trang</div>
<div class="t" style="top:518px;font-size:13px;line-height:20px;font-weight:700;left:1510.5px;width:300px;text-align:center;">1</div>
<div class="t" style="top:518px;font-size:11px;line-height:20px;color:#777;left:1533px;width:300px;text-align:center;">&gt;</div>
<div style="position:absolute;left:290px;top:546px;width:1406px;height:1px;background:#a8a8a8;"></div>
<div style="position:absolute;left:290px;top:547px;width:1406px;height:2px;background:#fbfbfd;"></div>
<div style="position:absolute;left:290px;top:549px;width:1406px;height:1px;background:#a8a8a8;"></div>
<div class="t" style="top:553px;font-size:14px;line-height:20px;color:#2f54eb;letter-spacing:-0.5px;left:306.5px;">Lịch sử biến động</div>
<div style="position:absolute;left:306px;top:578.5px;width:104px;height:2.3px;background:#2f54eb;border-radius:2px;"></div>
<svg style="left:1670px;top:555px" width="16" height="16" viewBox="0 0 16 16"><circle cx="8" cy="8" r="8" fill="#e2e3e9"/><path d="M4.800 6.800L8 9.800L11.200 6.800" fill="none" stroke="#2f54eb" stroke-width="1.500" stroke-linecap="round" stroke-linejoin="round"/></svg>
<div style="position:absolute;left:290px;top:583px;width:1406px;height:34px;background:#f4f4f5;"></div>
<div style="position:absolute;left:290px;top:582px;width:1406px;height:1px;background:#fafafa;"></div>
<div style="position:absolute;left:290px;top:617px;width:1406px;height:1px;background:#e7e7e7;"></div>
<div style="position:absolute;left:290px;top:652px;width:1406px;height:1px;background:#e7e7e7;"></div>
<div style="position:absolute;left:349px;top:583px;width:1px;height:69px;background:#e7e7e7;"></div>
<div style="position:absolute;left:499px;top:583px;width:1px;height:69px;background:#e7e7e7;"></div>
<div style="position:absolute;left:649px;top:583px;width:1px;height:69px;background:#e7e7e7;"></div>
<div style="position:absolute;left:799px;top:583px;width:1px;height:69px;background:#e7e7e7;"></div>
<div style="position:absolute;left:953px;top:583px;width:1px;height:69px;background:#e7e7e7;"></div>
<div style="position:absolute;left:1113px;top:583px;width:1px;height:69px;background:#e7e7e7;"></div>
<div style="position:absolute;left:1273px;top:583px;width:1px;height:69px;background:#e7e7e7;"></div>
<div style="position:absolute;left:1433px;top:583px;width:1px;height:69px;background:#e7e7e7;"></div>
<div style="position:absolute;left:1593px;top:583px;width:1px;height:69px;background:#e7e7e7;"></div>
<div style="position:absolute;left:1597px;top:583px;width:1px;height:69px;background:#e7e7e7;"></div>
<div class="t" style="top:590px;font-size:13px;line-height:20px;font-weight:700;color:#1f1f1f;letter-spacing:-0.3px;left:169.5px;width:300px;text-align:center;">STT</div>
<div class="t" style="top:590px;font-size:13px;line-height:20px;font-weight:700;color:#1f1f1f;letter-spacing:-0.77px;left:360px;">Số chứng từ</div>
<div class="t" style="top:590px;font-size:13px;line-height:20px;font-weight:700;color:#1f1f1f;letter-spacing:-0.71px;left:424.6px;width:300px;text-align:center;">Ngày chứng từ</div>
<div class="t" style="top:590px;font-size:13px;line-height:20px;font-weight:700;color:#1f1f1f;letter-spacing:-0.28px;left:574.5px;width:300px;text-align:center;">Ngày biến động</div>
<div class="t" style="top:590px;font-size:13px;line-height:20px;font-weight:700;color:#1f1f1f;letter-spacing:-0.5px;left:810px;">Nội dung</div>
<div class="t" style="top:590px;font-size:13px;line-height:20px;font-weight:700;color:#1f1f1f;letter-spacing:-0.28px;right:611.28px;text-align:right;">Nguyên giá</div>
<div class="t" style="top:590px;font-size:13px;line-height:20px;font-weight:700;color:#1f1f1f;letter-spacing:-0.28px;right:451.28px;text-align:right;">Giá trị HM/KH</div>
<div class="t" style="top:590px;font-size:13px;line-height:20px;font-weight:700;color:#1f1f1f;letter-spacing:-0.28px;right:291.28px;text-align:right;">HM và KH lũy kế</div>
<div class="t" style="top:590px;font-size:13px;line-height:20px;font-weight:700;color:#1f1f1f;letter-spacing:-0.45px;right:131.45px;text-align:right;">Giá trị còn lại</div>
<div class="t" style="top:590px;font-size:13px;line-height:20px;font-weight:700;color:#1f1f1f;letter-spacing:-0.76px;left:1496.4px;width:300px;text-align:center;">Chức năng</div>
<div class="t" style="top:626px;font-size:13px;line-height:20px;left:169.5px;width:300px;text-align:center;">1</div>
<div class="t" style="top:626px;font-size:13px;line-height:20px;letter-spacing:0.4px;left:424.5px;width:300px;text-align:center;">03/05/2024</div>
<div class="t" style="top:626px;font-size:13px;line-height:20px;letter-spacing:0.4px;left:574.5px;width:300px;text-align:center;">03/05/2024</div>
<div class="t" style="top:626px;font-size:13px;line-height:20px;letter-spacing:-0.14px;left:810px;">Theo dõi trên phần mề...</div>
<div class="t" style="top:626px;font-size:13px;line-height:20px;letter-spacing:-0.1px;right:611.10px;text-align:right;">89.982.200 Đ</div>
<div class="t" style="top:626px;font-size:13px;line-height:20px;letter-spacing:-0.1px;right:451.10px;text-align:right;">0 Đ</div>
<div class="t" style="top:626px;font-size:13px;line-height:20px;letter-spacing:-0.1px;right:291.10px;text-align:right;">0 Đ</div>
<div class="t" style="top:626px;font-size:13px;line-height:20px;letter-spacing:-0.1px;right:131.10px;text-align:right;">89.982.200 Đ</div>
<svg style="left:1636px;top:627.3px" width="16" height="16" viewBox="0 0 16 16" fill="none" stroke="#e0533a" stroke-width="1.400" stroke-linecap="round" stroke-linejoin="round"><path d="M1 4.500h14M4.400 4.500C4.400 2.200 5.800 .9 8 .9C10.200 .9 11.600 2.200 11.600 4.500"/><path d="M2.600 4.700v7.800c0 1.700.9 2.500 2.500 2.500h5.800c1.600 0 2.500-.8 2.500-2.500V4.700"/><path d="M6.200 6.800v4.600M9.800 6.800v4.600"/></svg>
<div style="position:absolute;left:1697px;top:484px;width:15px;height:224px;background:linear-gradient(90deg,rgba(125,125,130,0),rgba(125,125,130,.28) 45%,rgba(118,118,122,.75));-webkit-mask-image:linear-gradient(180deg,transparent 0,#000 14%,#000 88%,transparent 100%);mask-image:linear-gradient(180deg,transparent 0,#000 14%,#000 88%,transparent 100%);pointer-events:none;"></div>
<div style="position:absolute;left:0px;top:0px;width:1714px;height:724px;border:2px solid #ababab;pointer-events:none;"></div>
</div>
</body>
</html>
